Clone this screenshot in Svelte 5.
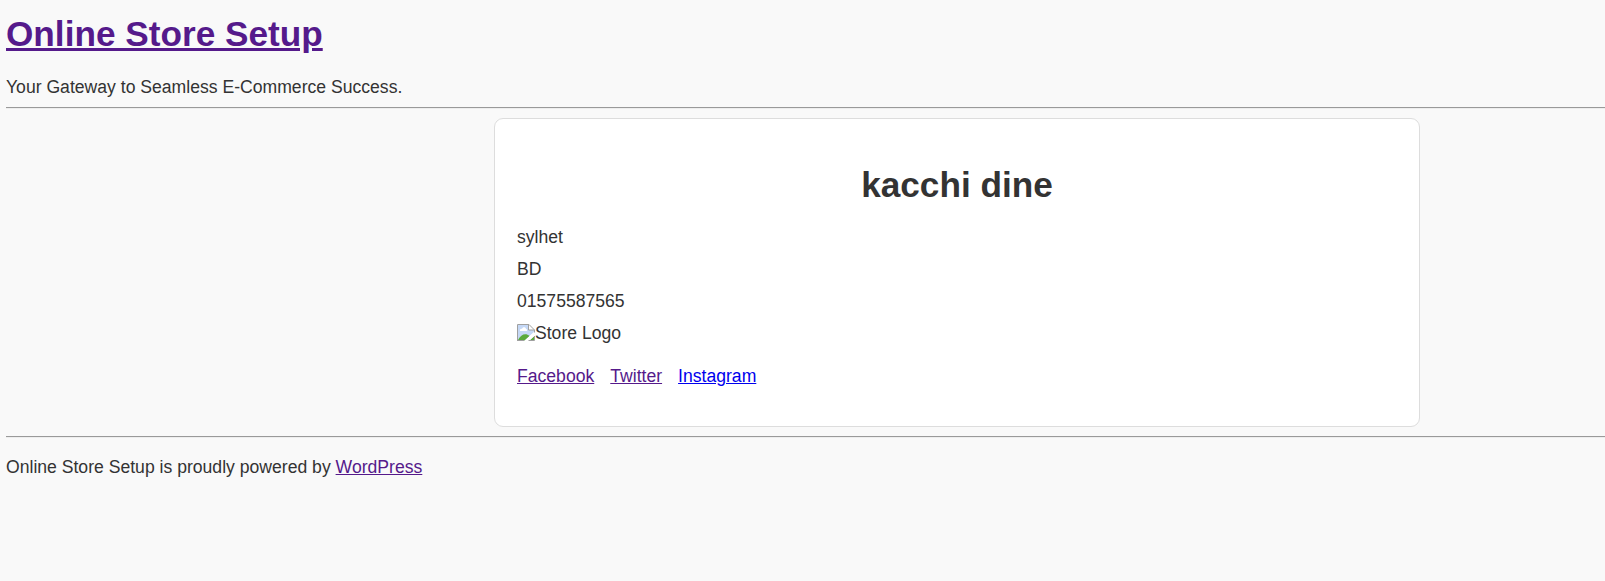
<script>
  const details = ['sylhet', 'BD', '01575587565'];
</script>

<div class="page">
  <header>
    <h1><a class="visited" href="#home">Online Store Setup</a></h1>
    <div>Your Gateway to Seamless E-Commerce Success.</div>
  </header>
  <hr />
  <main>
    <h1>kacchi dine</h1>
    {#each details as d}
      <p>{d}</p>
    {/each}
    <p class="logo">
      <svg width="18" height="18" viewBox="0 0 18 18">
        <path d="M1 1H11.5V6H17V8L7 17H1Z" fill="#c5d8f6" />
        <path d="M3 7C2.5 5 4.5 4.5 5 5C5.5 2.5 9 3 9 5C10.5 5 10.5 7 9.5 7Z" fill="#fff" />
        <path d="M1 17V16C4 10 9 9 12.5 12L7 17ZM12 17L17 12.500V17Z" fill="#5aaa3c" />
        <path d="M6.500 17.500L17.500 8V11.500L11 17.500Z" fill="#fff" />
        <path d="M.5 17V.5H12L17.500 6V8.500M.5 16.500H7M11.500 .5V6H17.500M11.500 16.500H17.500V12" fill="none" stroke="#a0a0a0" />
      </svg><span>Store Logo</span>
    </p>
    <nav>
      <a class="visited" href="#facebook">Facebook</a>
      <a class="visited" href="#twitter">Twitter</a>
      <a href="#instagram">Instagram</a>
    </nav>
  </main>
  <hr />
  <footer>Online Store Setup is proudly powered by <a class="visited" href="#wordpress">WordPress</a></footer>
</div>

<style>
  :global(body) { background: #f9f9f9; }
  .page {
    padding: 14px 0 15px 6px;
    font: 17.6px/23px "Liberation Sans", Arial, sans-serif;
    color: #333;
  }
  h1 { margin: 0; font-size: 35.2px; line-height: 40px; }
  header h1 { margin-bottom: 22px; }
  a { color: #00e; }
  .visited { color: #551a8b; }
  hr {
    margin: 8px 0 9px;
    border: 0;
    border-top: 1px solid #9a9a9a;
    border-bottom: 1px solid #eee;
  }
  main {
    box-sizing: border-box;
    width: 926px;
    height: 309px;
    margin: 0 0 9px 488px;
    padding: 46px 22px 22px;
    border: 1px solid #ddd;
    border-radius: 9px;
    background: #fff;
  }
  main h1 { text-align: center; margin-bottom: 21px; }
  p { margin: 0 0 9px; }
  .logo { display: flex; align-items: center; }
  .logo svg { margin-bottom: 2px; }
  nav { display: flex; gap: 16px; margin-top: 20px; }
  footer { margin-top: 18px; }
</style>
